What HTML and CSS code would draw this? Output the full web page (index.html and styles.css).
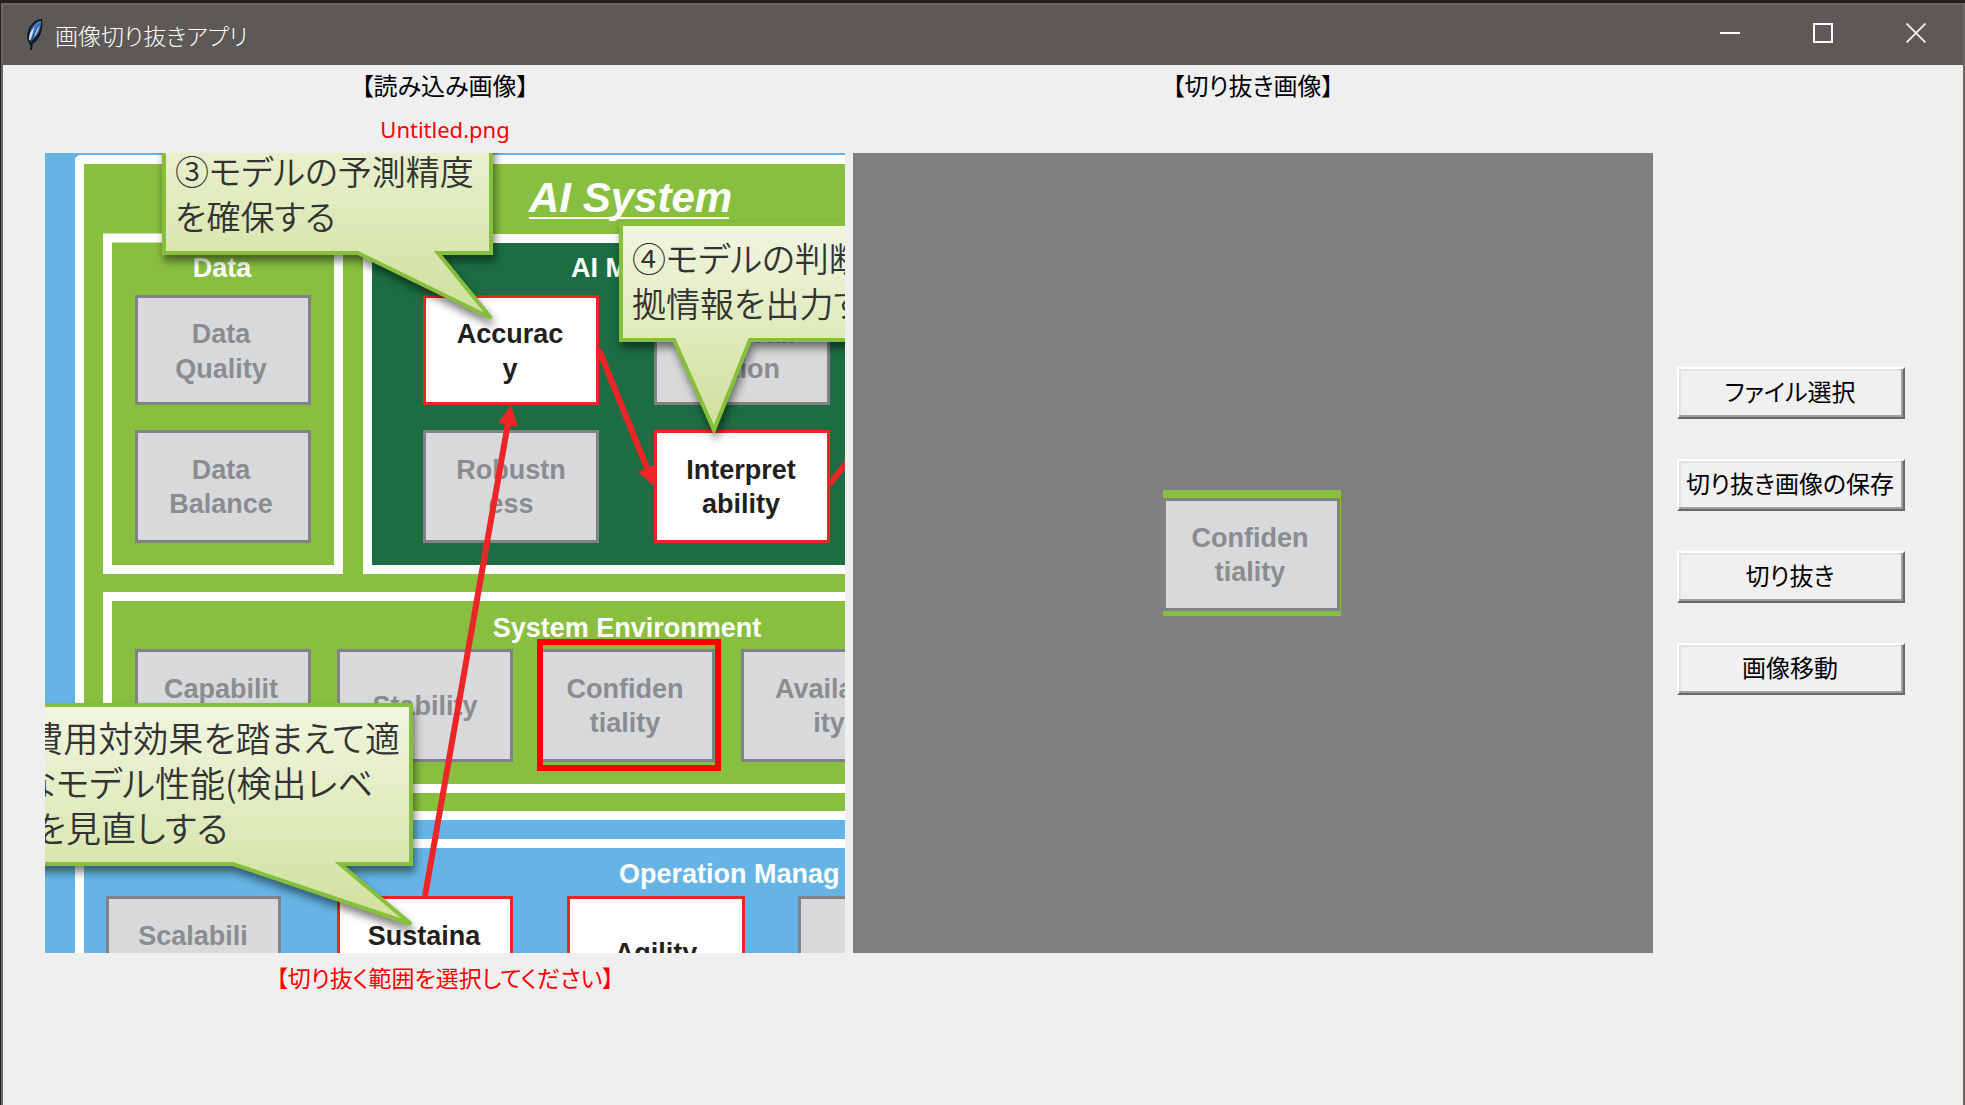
FILE: index.html
```html
<!DOCTYPE html>
<html lang="ja">
<head>
<meta charset="utf-8">
<meta name="viewport" content="width=device-width, initial-scale=1">
<title>画像切り抜きアプリ</title>
<link rel="stylesheet" href="styles.css">
</head>
<body>
<div class="window">
  <header class="titlebar">
    <svg class="feather" viewBox="0 0 20 34" aria-hidden="true">
      <path d="M6 32 L7 24" stroke="#111" stroke-width="2" fill="none"/>
      <path d="M5 27 C0 20 2 12 7 6 C10 2 14 1 17 1 C18 8 17 15 13 21 C11 24 8 26 5 27Z" fill="#16191f"/>
      <path d="M5 23 C3 16 6 9 11 5 C13 3 15 3 16 3 C16 9 14 15 11 18 C9 21 7 23 5 23Z" fill="#3f7fd0"/>
      <path d="M4 22 C4 16 7 11 9 10 C8 14 7 18 5 22Z" fill="#dbe9f6"/>
      <path d="M9 18 C10 13 11 9 14 6 C14 10 13 14 10 18Z" fill="#9cc4ee"/>
      <path d="M6 25 C8 18 11 11 14 6" stroke="#1d3556" fill="none"/>
    </svg>
    <h1 class="app-title">画像切り抜きアプリ</h1>
    <div class="caption-buttons">
      <button class="caption" type="button" aria-label="最小化"><svg viewBox="0 0 20 20"><path d="M0 10H20" stroke="#fff" stroke-width="2"/></svg></button>
      <button class="caption" type="button" aria-label="最大化"><svg viewBox="0 0 20 20"><path d="M1 1H19V19H1Z" fill="none" stroke="#fff" stroke-width="2"/></svg></button>
      <button class="caption" type="button" aria-label="閉じる"><svg viewBox="0 0 20 20"><path d="M0.5 0.5L19.5 19.5M19.5 0.5L0.5 19.5" stroke="#f4f2f0" stroke-width="1.8"/></svg></button>
    </div>
  </header>

  <main class="client">
    <section class="panel">
      <h2 class="label">【読み込み画像】</h2>
      <p class="label filename">Untitled.png</p>
      <svg class="canvas" viewBox="0 0 800 800" role="img" aria-label="読み込み画像">
        <defs>
          <linearGradient id="callout-fill" x1="0" y1="0" x2="0" y2="1">
            <stop offset="0" stop-color="#f1f6e0"/>
            <stop offset="1" stop-color="#cfe09b"/>
          </linearGradient>
        </defs>
        <rect width="800" height="800" fill="#65b4e5"/>

        <rect class="frame green" x="34.500" y="6.500" width="900" height="656" rx="1"/>
        <rect class="frame green" x="62.500" y="85" width="231" height="331.500"/>
        <rect class="frame forest" x="322.500" y="85.500" width="600" height="331"/>
        <rect class="frame green" x="62.500" y="443.500" width="860" height="192"/>
        <rect class="frame blue" x="34.500" y="690.500" width="900" height="200"/>

        <text class="system" x="484" y="59">AI System</text>
        <path d="M484 65H684" stroke="#fff" stroke-width="2"/>

        <g class="node">
          <rect x="91.500" y="143.500" width="173" height="107"/>
          <rect x="91.500" y="278.500" width="173" height="110"/>
          <rect x="379.500" y="278.500" width="173" height="110"/>
          <rect x="610.500" y="143.500" width="173" height="107"/>
          <rect x="91.500" y="497.500" width="173" height="110"/>
          <rect x="293.500" y="497.500" width="173" height="110"/>
          <rect x="494.500" y="497.500" width="174" height="110"/>
          <rect x="697.500" y="497.500" width="173" height="110"/>
          <rect x="62.500" y="744.500" width="172" height="110"/>
          <rect x="754.500" y="744.500" width="173" height="110"/>
        </g>
        <g class="node picked">
          <rect x="379.500" y="143.500" width="173" height="107"/>
          <rect x="610.500" y="278.500" width="173" height="110"/>
          <rect x="293.500" y="744.500" width="173" height="110"/>
          <rect x="523.500" y="744.500" width="175" height="110"/>
        </g>

        <g class="caption-text">
          <text x="177" y="124">Data</text>
          <text class="from-start" x="526" y="124">AI M</text>
          <text x="582" y="484">System Environment</text>
          <text class="from-start" x="574" y="730">Operation Manag</text>
        </g>
        <g class="node-text">
          <text x="176" y="190">Data</text><text x="176" y="225">Quality</text>
          <text x="176" y="326">Data</text><text x="176" y="360">Balance</text>
          <text x="466" y="326">Robustn</text><text x="466" y="360">ess</text>
          <text x="696" y="190">Generali</text><text x="696" y="225">zation</text>
          <text x="176" y="545">Capabilit</text>
          <text x="380" y="562">Stability</text>
          <text x="580" y="545">Confiden</text><text x="580" y="579">tiality</text>
          <text x="785" y="545">Availabil</text><text x="784" y="579">ity</text>
          <text x="148" y="792">Scalabili</text>
        </g>
        <g class="node-text strong">
          <text x="465" y="190">Accurac</text><text x="465" y="225">y</text>
          <text x="696" y="326">Interpret</text><text x="696" y="360">ability</text>
          <text x="379" y="792">Sustaina</text>
          <text x="611" y="809">Agility</text>
        </g>

        <g stroke="#ed2529" stroke-width="6" fill="none">
          <path d="M380 743L463 270"/>
          <path d="M554 197L604 320"/>
          <path d="M784 332L806 304"/>
        </g>
        <path d="M466 252L473 274L453 270Z" fill="#ed2529"/>
        <path d="M611 335L593 319L611 311Z" fill="#ed2529"/>

        <g class="callout">
          <path d="M119 -60H446V100H393L446 165L313 100H119Z"/>
          <path d="M576 71H980V187H705L669 277L629 187H576Z"/>
          <path d="M-60 552H366V711H295L366 771L188 711H-60Z"/>
        </g>
        <g class="note">
          <text x="130" y="32">③モデルの予測精度</text>
          <text x="130" y="77">を確保する</text>
          <text x="587" y="119">④モデルの判断</text>
          <text x="587" y="164">拠情報を出力す</text>
        </g>
        <g class="note wide">
          <text x="355" y="599">費用対効果を踏まえて適</text>
          <text x="328" y="644">なモデル性能(検出レベ</text>
          <text x="183" y="689">を見直しする</text>
        </g>

        <rect x="495" y="489" width="178" height="126" fill="none" stroke="#f00" stroke-width="6"/>
      </svg>
      <p class="label status">【切り抜く範囲を選択してください】</p>
    </section>

    <section class="panel">
      <h2 class="label">【切り抜き画像】</h2>
      <p class="label"></p>
      <div class="canvas result">
        <svg class="cutout" viewBox="493 488 178 126" role="img" aria-label="切り抜き画像">
          <rect x="493" y="488" width="178" height="126" fill="#88bf40"/>
          <g class="node"><rect x="494.500" y="497.500" width="174" height="110"/></g>
          <g class="node-text"><text x="580" y="545">Confiden</text><text x="580" y="579">tiality</text></g>
        </svg>
      </div>
    </section>

    <nav class="actions" aria-label="操作">
      <button class="action" type="button">ファイル選択</button>
      <button class="action" type="button">切り抜き画像の保存</button>
      <button class="action" type="button">切り抜き</button>
      <button class="action" type="button">画像移動</button>
    </nav>
  </main>
</div>
</body>
</html>
```
FILE: styles.css
```css
* {
  box-sizing: border-box;
}

body {
  margin: 0;
  padding: 3px 0 0 1px;
  background: #212121;
  color: #000;
  font-family: "Noto Sans CJK JP", sans-serif;
  font-size: 24px;
  font-feature-settings: "palt";
}

.window {
  display: flex;
  flex-direction: column;
  min-height: calc(100vh - 3px);
  border: 2px solid #6b6661;
  border-bottom: 0;
  background: #efefef;
}

.titlebar {
  display: flex;
  align-items: center;
  height: 60px;
  padding-left: 22px;
  background: #5d5956;
  color: #fff;
}

.feather {
  width: 20px;
  height: 34px;
}

.app-title {
  flex: 1;
  margin: 0 0 0 10px;
  font-size: 23px;
  font-weight: 300;
  line-height: 32px;
}

.caption-buttons {
  display: flex;
  align-self: stretch;
}

.caption {
  display: grid;
  place-items: center;
  width: 93px;
  padding: 0 2px 4px 0;
  border: 0;
  background: none;
}

.caption svg {
  width: 20px;
  height: 20px;
}

.client {
  display: grid;
  grid-template-columns: minmax(0, 800px) minmax(0, 800px) auto;
  column-gap: 8px;
  padding: 0 16px 0 42px;
}

.label {
  height: 44px;
  margin: 0;
  font-size: 24px;
  font-weight: 400;
  line-height: 40px;
  text-align: center;
  white-space: nowrap;
}

.filename {
  color: #f00;
  font-family: "Noto Sans", sans-serif;
  font-size: 22px;
}

.status {
  padding-top: 4px;
  color: #f00;
  font-size: 23px;
}

.canvas {
  display: block;
  width: 100%;
  aspect-ratio: 1;
  overflow: hidden;
}

.result {
  display: grid;
  place-items: center;
  padding-right: 2px;
  background: #808080;
}

.cutout {
  width: 178px;
}

.actions {
  display: flex;
  flex-direction: column;
  justify-content: center;
  gap: 40px;
  margin-left: 16px;
}

.action {
  width: 228px;
  height: 52px;
  padding: 0 2px 4px 0;
  border: 2px solid;
  border-color: #fff #696969 #696969 #fff;
  background: #f0f0f0;
  box-shadow: inset -2px -2px #a0a0a0, inset 2px 2px #e3e3e3;
  color: #000;
  font: inherit;
  font-feature-settings: inherit;
  line-height: 36px;
  white-space: nowrap;
}

/* Diagram */
.frame {
  stroke: #fff;
  stroke-width: 9px;
}

.green {
  fill: #88bf40;
}

.forest {
  fill: #1c6e42;
}

.blue {
  fill: #65b4e5;
}

.node {
  fill: #d8d9db;
  stroke: #808285;
  stroke-width: 3px;
}

.picked {
  fill: #fff;
  stroke: #ed2529;
}

.caption-text,
.node-text,
.system {
  font-family: "Liberation Sans", Arial, sans-serif;
  font-size: 27px;
  font-weight: 700;
  text-anchor: middle;
}

.caption-text,
.system {
  fill: #fff;
}

.node-text {
  fill: #8a8c8f;
}

.strong {
  fill: #231f20;
}

.system {
  font-size: 42px;
  font-style: italic;
}

.system,
.from-start {
  text-anchor: start;
}

.callout {
  fill: url(#callout-fill);
  stroke: #86bf3c;
  stroke-width: 4px;
  filter: drop-shadow(2px 6px 4px rgba(0, 0, 0, 0.5));
}

.note {
  fill: #333;
  font-size: 34px;
  font-weight: 350;
}

.wide {
  font-size: 35px;
  text-anchor: end;
}
```
